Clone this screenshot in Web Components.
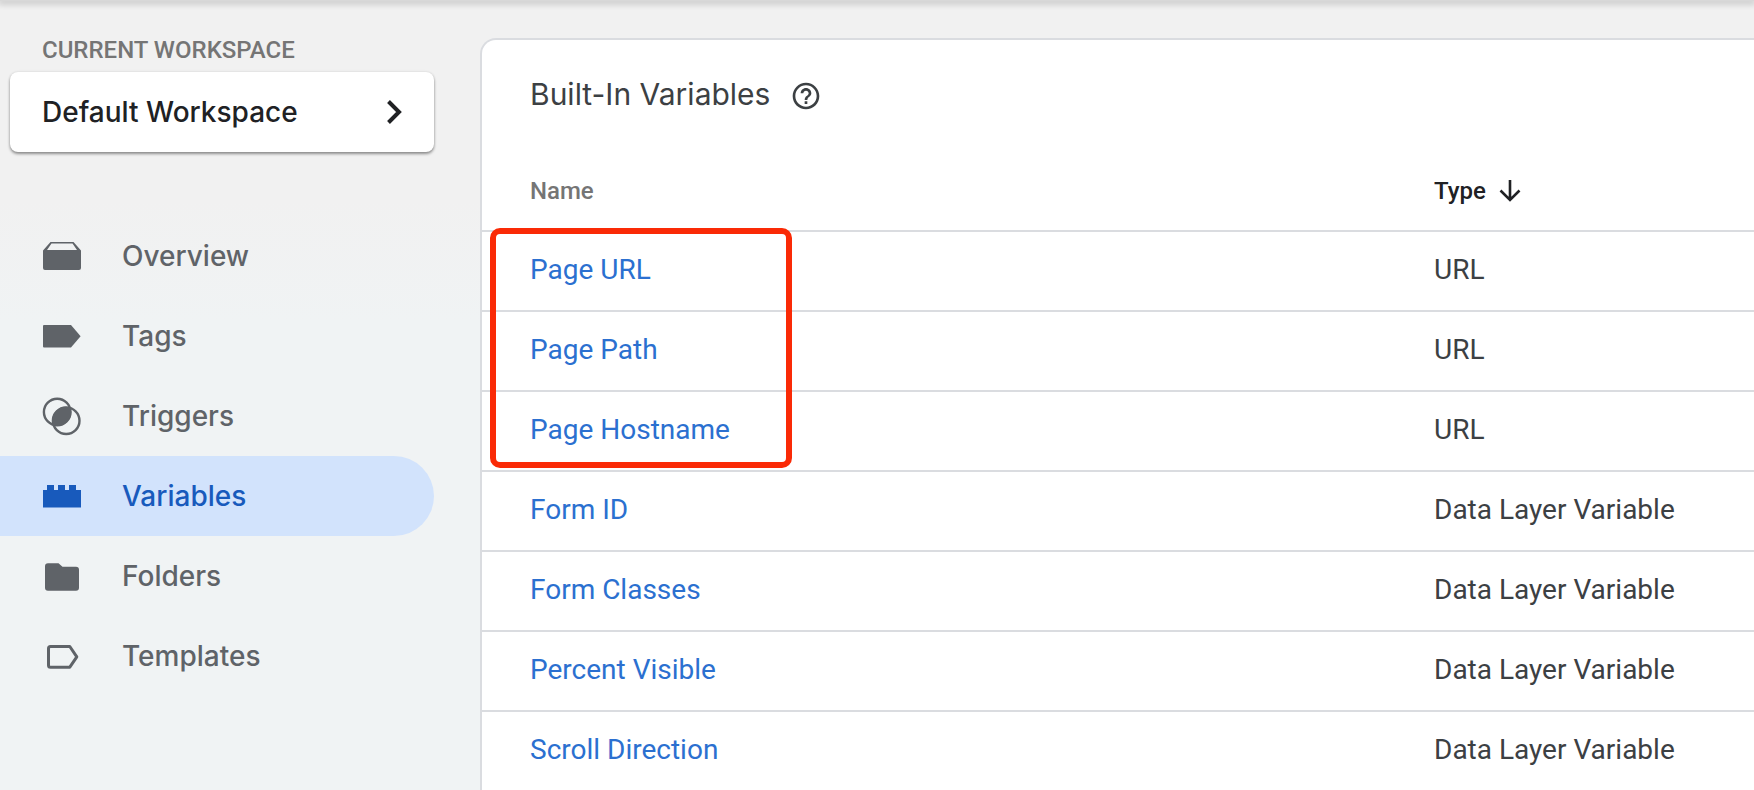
<!DOCTYPE html>
<html lang="en">
<head>
<meta charset="utf-8">
<title>Variables</title>
<style>
  html, body {
    height: 100%;
  }
  body {
    margin: 0;
    overflow: hidden;
    background: #f1f1f1;
    color: #3c4043;
    font-family: Roboto, sans-serif;
  }
</style>
</head>
<body>
<tag-manager>
  <side-bar slot="side">
    <workspace-picker label="Current workspace">Default Workspace</workspace-picker>
    <nav-list>
      <nav-item icon="overview">Overview</nav-item>
      <nav-item icon="tags">Tags</nav-item>
      <nav-item icon="triggers">Triggers</nav-item>
      <nav-item icon="variables" active>Variables</nav-item>
      <nav-item icon="folders">Folders</nav-item>
      <nav-item icon="templates">Templates</nav-item>
    </nav-list>
  </side-bar>
  <content-card>
    <span slot="title">Built-In Variables</span>
    <variable-table></variable-table>
  </content-card>
</tag-manager>

<script>
const ICONS = {
  overview: '<path d="M8.5 6h23L39 14.500V32a2 2 0 0 1-2 2H3a2 2 0 0 1-2-2V14.500zM9.500 7.600L5 14h30l-4.500-6.400z" fill-rule="evenodd"/>',
  tags: '<path d="M2 9h27l9.600 11.200L29 31.500H2a1 1 0 0 1-1-1V10a1 1 0 0 1 1-1z"/>',
  triggers: '<g fill="none" stroke="currentColor" stroke-width="2.400"><circle cx="15.200" cy="16" r="13.300"/><circle cx="24.200" cy="24.700" r="13.300"/></g><path d="M28.500 11.900A13.500 13.500 0 0 1 10.900 28.800A13.500 13.500 0 0 1 28.500 11.900z"/>',
  variables: '<path d="M1 14h4V9h7v5h4V9h7v5h4V9h7v5h5v17.500H1z"/>',
  folders: '<path d="M6 7.300h10.500l4 3.400H34a3 3 0 0 1 3 3v18a3 3 0 0 1-3 3H6a3 3 0 0 1-3-3v-21.400a3 3 0 0 1 3-3z"/>',
  templates: '<path d="M8.500 10.500h19.300l7 10.400-7 10.300H8.500a2 2 0 0 1-2-2V12.500a2 2 0 0 1 2-2z" fill="none" stroke="currentColor" stroke-width="3" stroke-linejoin="round"/>'
};

const VARIABLES = [
  ['Page URL', 'URL'],
  ['Page Path', 'URL'],
  ['Page Hostname', 'URL'],
  ['Form ID', 'Data Layer Variable'],
  ['Form Classes', 'Data Layer Variable'],
  ['Percent Visible', 'Data Layer Variable'],
  ['Scroll Direction', 'Data Layer Variable']
];

class TagManager extends HTMLElement {
  constructor(){
    super();
    this._root = this.attachShadow({mode: 'open'});
  }

  connectedCallback(){
    this._root.innerHTML = `
    <style>
      :host {
        display: flex;
        flex-direction: column;
        height: 100%;
      }
      header {
        flex: none;
        position: relative;
        height: 1px;
        background: #d8d8d8;
        box-shadow: 0 1px 6px 2px rgba(0, 0, 0, .2);
      }
      .body {
        flex: 1;
        display: grid;
        grid-template-columns: 434px minmax(0, 1fr);
        column-gap: 46px;
        background: linear-gradient(#f1f1f1 200px, #f0f3f4 320px);
      }
      main {
        padding-top: 37px;
      }
    </style>
    <header></header>
    <div class="body">
      <slot name="side"></slot>
      <main><slot></slot></main>
    </div>`;
  }
}

class SideBar extends HTMLElement {
  constructor(){
    super();
    this._root = this.attachShadow({mode: 'open'});
  }

  connectedCallback(){
    this._root.innerHTML = `
    <style>
      :host {
        display: flex;
        flex-direction: column;
        gap: 64px;
        padding-top: 33px;
        font-family: "Google Sans", Inter, sans-serif;
        font-size: 28px;
        font-weight: 500;
      }
    </style>
    <slot></slot>`;
  }
}

class WorkspacePicker extends HTMLElement {
  constructor(){
    super();
    this._root = this.attachShadow({mode: 'open'});
  }

  connectedCallback(){
    this._root.innerHTML = `
    <style>
      :host {
        display: block;
        padding-left: 10px;
      }
      .label {
        padding: 0 32px;
        margin-bottom: 6px;
        font: 500 24px/32px Roboto, sans-serif;
        text-transform: uppercase;
        color: #757575;
      }
      button {
        display: flex;
        align-items: center;
        justify-content: space-between;
        box-sizing: border-box;
        width: 100%;
        height: 80px;
        padding: 0 32px;
        border: 0;
        border-radius: 8px;
        background: #fff;
        box-shadow: 0 2px 3px rgba(0, 0, 0, .4), 0 0 3px rgba(0, 0, 0, .1);
        font: inherit;
        color: #202124;
        cursor: pointer;
      }
    </style>
    <div class="label" id="label">${this.getAttribute('label')}</div>
    <button aria-describedby="label">
      <span><slot></slot></span>
      <svg width="16" height="24" viewBox="0 0 16 24" fill="none" stroke="currentColor" stroke-width="4" aria-hidden="true">
        <path d="M2.500 1.500L13 12 2.500 22.500"/>
      </svg>
    </button>`;
  }
}

class NavList extends HTMLElement {
  constructor(){
    super();
    this._root = this.attachShadow({mode: 'open'});
  }

  connectedCallback(){
    this._root.innerHTML = `
    <style>
      :host {
        display: block;
      }
    </style>
    <nav><slot></slot></nav>`;
  }
}

class NavItem extends HTMLElement {
  constructor(){
    super();
    this._root = this.attachShadow({mode: 'open'});
  }

  connectedCallback(){
    this._root.innerHTML = `
    <style>
      :host {
        display: block;
        color: #5f6368;
      }
      :host([active]) {
        color: #185abc;
      }
      a {
        display: flex;
        align-items: center;
        gap: 40px;
        height: 80px;
        padding-left: 42px;
        border-radius: 0 40px 40px 0;
        color: inherit;
        text-decoration: none;
      }
      :host([active]) a {
        background: #d2e3fc;
      }
      svg {
        flex: none;
      }
    </style>
    <a href="#">
      <svg width="40" height="40" viewBox="0 0 40 40" fill="currentColor" aria-hidden="true">${ICONS[this.getAttribute('icon')]}</svg>
      <span><slot></slot></span>
    </a>`;
  }
}

class ContentCard extends HTMLElement {
  constructor(){
    super();
    this._root = this.attachShadow({mode: 'open'});
  }

  connectedCallback(){
    this._root.innerHTML = `
    <style>
      :host {
        display: block;
        border: 2px solid #dadce0;
        border-right: 0;
        border-radius: 16px 0 0 0;
        background: #fff;
      }
      .head {
        display: flex;
        align-items: center;
        gap: 20px;
        height: 112px;
        padding-left: 48px;
      }
      h1 {
        margin: 0;
        padding-bottom: 4px;
        font: 400 30px/40px "Google Sans", Inter, sans-serif;
      }
      button {
        display: flex;
        padding: 0;
        border: 0;
        background: none;
        color: inherit;
        cursor: pointer;
      }
    </style>
    <div class="head">
      <h1><slot name="title"></slot></h1>
      <button aria-label="Help">
        <svg width="32" height="32" viewBox="0 0 24 24" fill="currentColor" aria-hidden="true">
          <path d="M11 18h2v-2h-2v2zm1-16C6.480 2 2 6.480 2 12s4.480 10 10 10 10-4.480 10-10S17.520 2 12 2zm0 18c-4.410 0-8-3.590-8-8s3.590-8 8-8 8 3.590 8 8-3.590 8-8 8zm0-14c-2.210 0-4 1.790-4 4h2c0-1.100.9-2 2-2s2 .9 2 2c0 2-3 1.750-3 5h2c0-2.250 3-2.500 3-5 0-2.210-1.790-4-4-4z"/>
        </svg>
      </button>
    </div>
    <slot></slot>`;
  }
}

class VariableTable extends HTMLElement {
  constructor(){
    super();
    this._root = this.attachShadow({mode: 'open'});
  }

  connectedCallback(){
    const rows = VARIABLES.map(([name, type]) => `
        <tr><td><a href="#">${name}</a></td><td>${type}</td></tr>`).join('');

    this._root.innerHTML = `
    <style>
      :host {
        display: block;
        position: relative;
      }
      table {
        width: 100%;
        table-layout: fixed;
        border-spacing: 0;
        font-size: 28px;
      }
      th, td {
        box-sizing: border-box;
        height: 80px;
        padding: 0;
        border-bottom: 2px solid #dadce0;
        text-align: left;
      }
      td {
        padding-bottom: 4px;
      }
      th {
        font-size: 24px;
        font-weight: 500;
        color: #757575;
      }
      th:first-child, td:first-child {
        padding-left: 48px;
      }
      .type {
        width: 320px;
      }
      .sort {
        display: flex;
        align-items: center;
        gap: 12px;
        padding: 0;
        border: 0;
        background: none;
        font: inherit;
        color: #202124;
        cursor: pointer;
      }
      a {
        color: #2b70d0;
        text-decoration: none;
      }
      /* callout drawn over the first three rows */
      .highlight {
        position: absolute;
        top: 76px;
        left: 8px;
        box-sizing: border-box;
        width: 302px;
        height: 240px;
        border: 6px solid #fa2a06;
        border-radius: 10px;
        pointer-events: none;
      }
    </style>
    <table>
      <thead>
        <tr>
          <th scope="col">Name</th>
          <th scope="col" class="type" aria-sort="descending">
            <button class="sort">Type
              <svg width="24" height="24" viewBox="0 0 24 24" fill="none" stroke="currentColor" stroke-width="2.600" aria-hidden="true">
                <path d="M12 1v20M2.500 11.500l9.500 9.500 9.500-9.500"/>
              </svg>
            </button>
          </th>
        </tr>
      </thead>
      <tbody>${rows}
      </tbody>
    </table>
    <div class="highlight"></div>`;
  }
}

window.customElements.define('tag-manager', TagManager);
window.customElements.define('side-bar', SideBar);
window.customElements.define('workspace-picker', WorkspacePicker);
window.customElements.define('nav-list', NavList);
window.customElements.define('nav-item', NavItem);
window.customElements.define('content-card', ContentCard);
window.customElements.define('variable-table', VariableTable);
</script>
</body>
</html>
